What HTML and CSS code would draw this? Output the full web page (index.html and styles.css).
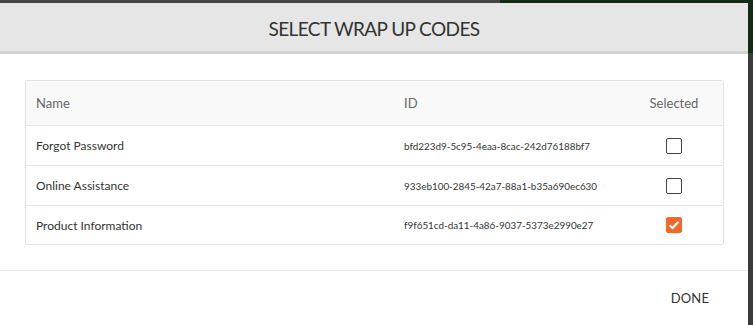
FILE: index.html
```html
<!DOCTYPE html>
<html>
<head>
<meta charset="utf-8">
<link rel="stylesheet" href="styles.css">
</head>
<body>
<div class="backdrop">
  <div class="topstrip"><div class="gray"></div><div class="green"></div></div>
  <div class="main">
    <div class="modal">
      <div class="header">SELECT WRAP UP CODES</div>
      <div class="body">
        <div class="table">
          <div class="row head">
            <div class="c-name">Name</div>
            <div class="c-id">ID</div>
            <div class="c-sel">Selected</div>
          </div>
          <div class="row">
            <div class="c-name">Forgot Password</div>
            <div class="c-id mono">bfd223d9-5c95-4eaa-8cac-242d76188bf7</div>
            <div class="c-sel"><span class="cb"></span></div>
          </div>
          <div class="row">
            <div class="c-name">Online Assistance</div>
            <div class="c-id mono">933eb100-2845-42a7-88a1-b35a690ec630</div>
            <div class="c-sel"><span class="cb"></span></div>
          </div>
          <div class="row last">
            <div class="c-name">Product Information</div>
            <div class="c-id mono">f9f651cd-da11-4a86-9037-5373e2990e27</div>
            <div class="c-sel"><span class="cb checked"><svg width="12" height="10" viewBox="0 0 12 10"><path d="M1.5 5.2 L4.5 8 L10.5 1.8" fill="none" stroke="#fff" stroke-width="2"/></svg></span></div>
          </div>
        </div>
      </div>
      <div class="footer"><span class="done">DONE</span></div>
    </div>
    <div class="side"><div class="sg"></div><div class="sd"></div></div>
  </div>
</div>
</body>
</html>
```

FILE: styles.css
```css
* { box-sizing: border-box; }
html, body { margin: 0; padding: 0; }
body { width: 753px; height: 325px; overflow: hidden; font-family: Lato, "Open Sans", sans-serif; background: #3b3b3b; }
.backdrop { display: flex; flex-direction: column; height: 325px; }
.topstrip { display: flex; height: 3px; flex: none; }
.topstrip .gray { width: 500px; background: #454545; }
.topstrip .green { flex: 1; background: #142a16; }
.main { display: flex; flex: 1; }
.modal { width: 748px; background: #fff; display: flex; flex-direction: column; }
.side { flex: 1; display: flex; flex-direction: column; }
.side .sg { height: 50px; background: #142a16; }
.side .sd { flex: 1; background: #3a3a3a; }
.header { height: 51px; background: #e6e6e6; border-bottom: 3px solid #d2d2d2; display: flex; align-items: center; justify-content: center; font-size: 19px; color: #333; letter-spacing: -0.6px; padding-top: 2px; }
.body { padding: 26px 24px 25px 25px; border-bottom: 1px solid #ebebeb; }
.table { border: 1px solid #e2e2e2; border-radius: 3px; }
.row { display: flex; align-items: center; height: 40px; border-top: 1px solid #e6e6e6; font-size: 12px; color: #333; }
.row.last { height: 39px; }
.row.head { border-top: none; height: 44px; background: #f9f9f9; color: #666; font-size: 13px; }
.c-name { width: 368px; padding-left: 10px; }
.c-id { width: 240px; padding-left: 10px; }
.mono { font-size: 9.9px; color: #333; }
.c-sel { flex: 1; display: flex; justify-content: center; padding-right: 9px; }
.cb { width: 16px; height: 16px; border: 1px solid #444; border-radius: 2px; background: #fff; display: flex; align-items: center; justify-content: center; }
.cb.checked { background: #f26a2b; border-color: #f26a2b; }
.footer { flex: 1; display: flex; align-items: center; justify-content: flex-end; padding-right: 39px; padding-bottom: 1px; }
.done { font-size: 13px; color: #333; letter-spacing: 0.1px; }
```
